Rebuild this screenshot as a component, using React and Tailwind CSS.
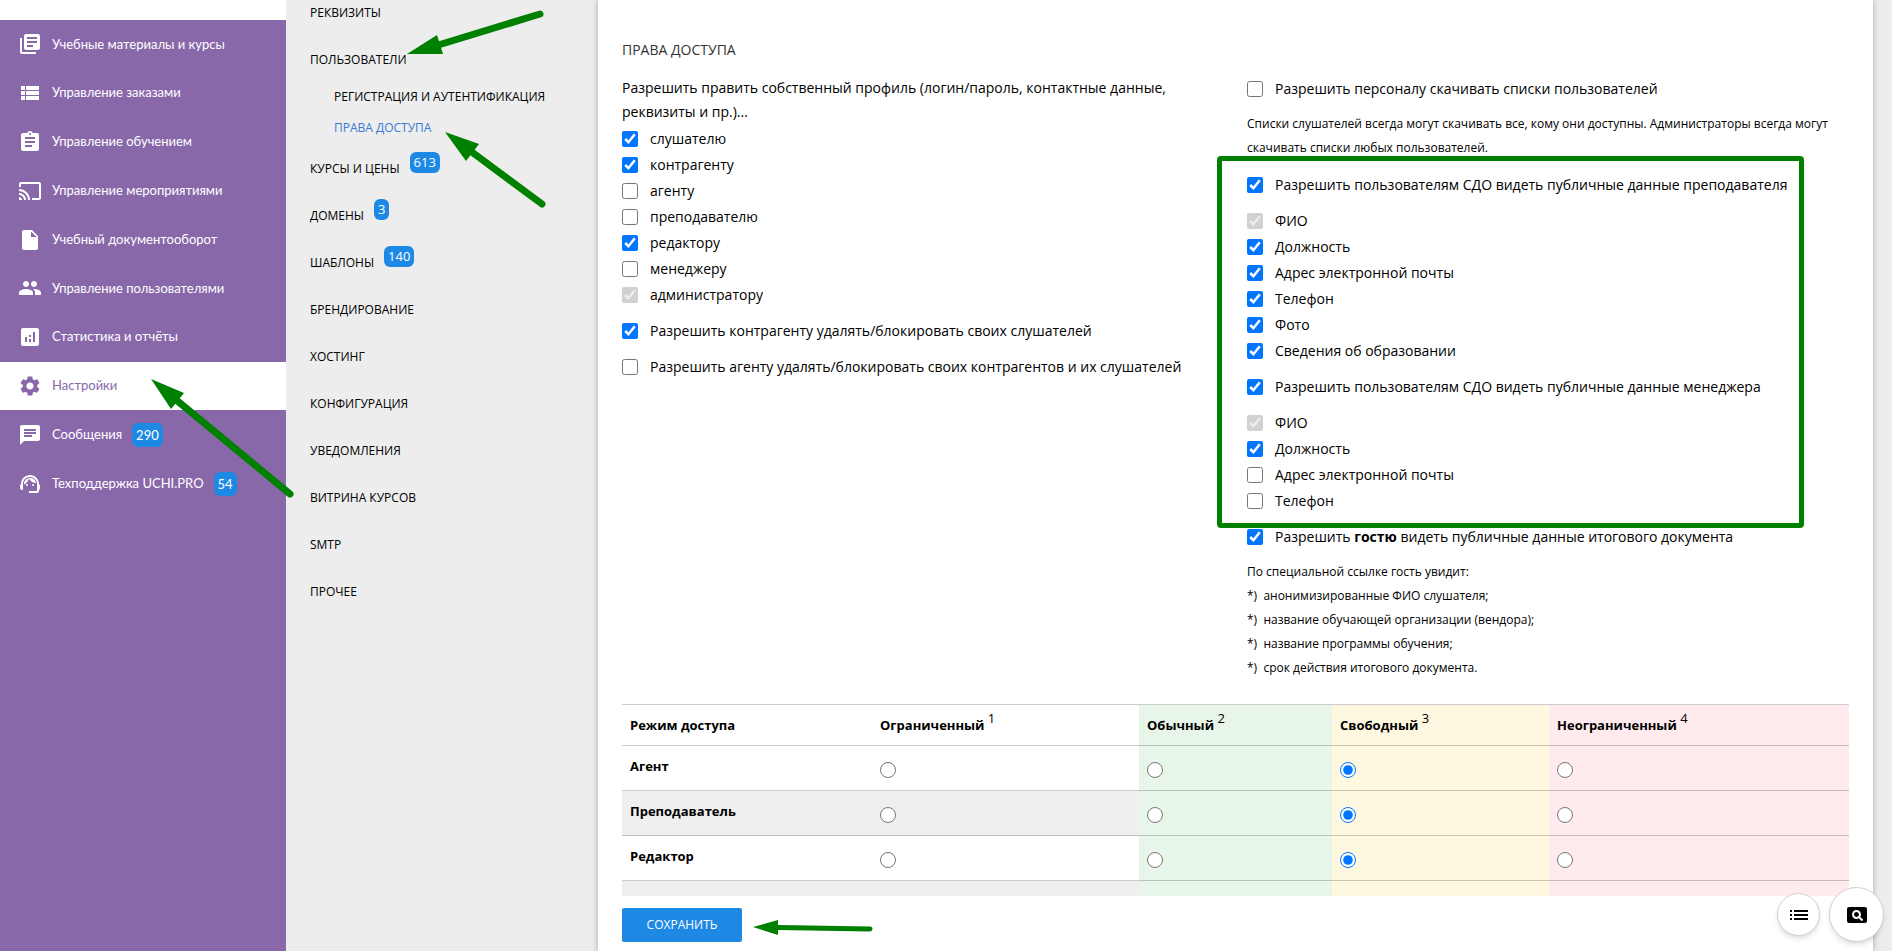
import React from "react";
import {
  MdLibraryBooks, MdViewList, MdAssignment, MdCast, MdInsertDriveFile, MdPeople,
  MdAnalytics, MdSettings, MdChat, MdSupportAgent, MdList, MdPageview,
} from "react-icons/md";

const mainMenu = [
  { icon: MdLibraryBooks, label: "Учебные материалы и курсы" },
  { icon: MdViewList, label: "Управление заказами" },
  { icon: MdAssignment, label: "Управление обучением" },
  { icon: MdCast, label: "Управление мероприятиями" },
  { icon: MdInsertDriveFile, label: "Учебный документооборот" },
  { icon: MdPeople, label: "Управление пользователями" },
  { icon: MdAnalytics, label: "Статистика и отчёты" },
  { icon: MdSettings, label: "Настройки", active: true },
  { icon: MdChat, label: "Сообщения", count: 290 },
  { icon: MdSupportAgent, label: "Техподдержка UCHI.PRO", count: 54 },
];

const settingsMenu = [
  { label: "РЕКВИЗИТЫ" },
  { label: "ПОЛЬЗОВАТЕЛИ", children: ["РЕГИСТРАЦИЯ И АУТЕНТИФИКАЦИЯ", "ПРАВА ДОСТУПА"] },
  { label: "КУРСЫ И ЦЕНЫ", count: 613 },
  { label: "ДОМЕНЫ", count: 3 },
  { label: "ШАБЛОНЫ", count: 140 },
  { label: "БРЕНДИРОВАНИЕ" },
  { label: "ХОСТИНГ" },
  { label: "КОНФИГУРАЦИЯ" },
  { label: "УВЕДОМЛЕНИЯ" },
  { label: "ВИТРИНА КУРСОВ" },
  { label: "SMTP" },
  { label: "ПРОЧЕЕ" },
];

const roles = [
  ["слушателю", true], ["контрагенту", true], ["агенту", false], ["преподавателю", false],
  ["редактору", true], ["менеджеру", false], ["администратору", true, true],
];
const teacherFields = [
  ["ФИО", true, true], ["Должность", true], ["Адрес электронной почты", true],
  ["Телефон", true], ["Фото", true], ["Сведения об образовании", true],
];
const managerFields = [
  ["ФИО", true, true], ["Должность", true], ["Адрес электронной почты", false], ["Телефон", false],
];
const modes = [
  ["Ограниченный", ""], ["Обычный", "bg-[#e8f5e9]"], ["Свободный", "bg-[#fff8e1]"], ["Неограниченный", "bg-[#ffebee]"],
];

function Check({ checked, disabled, children }) {
  return (
    <label className="flex h-[26px] items-center gap-3 whitespace-nowrap">
      <input type="checkbox" defaultChecked={checked} disabled={disabled} className="size-4 shrink-0 accent-[#0075ff]" />
      <span>{children}</span>
    </label>
  );
}

function CheckList({ items }) {
  return (
    <div>
      {items.map(([label, checked, disabled]) => (
        <Check key={label} checked={checked} disabled={disabled}>{label}</Check>
      ))}
    </div>
  );
}

function Arrow({ tail, tip, base, width }) {
  const neck = [(base[0][0] + base[1][0]) / 2, (base[0][1] + base[1][1]) / 2];
  return (
    <g fill="#008000" stroke="none">
      <line x1={tail[0]} y1={tail[1]} x2={neck[0]} y2={neck[1]} stroke="#008000" strokeWidth={width} strokeLinecap="round" />
      <polygon points={`${tip} ${base[0]} ${base[1]}`} />
    </g>
  );
}

export default function App() {
  return (
    <div className="relative flex h-screen overflow-hidden bg-[#ededed] font-['Open_Sans','Noto_Sans',sans-serif] text-black">
      <nav className="w-[286px] shrink-0 bg-[#8968aa] font-[Lato,'Open_Sans',sans-serif] text-[13px] text-white">
        <div className="h-5 bg-white" />
        <ul className="grid h-[488px] grid-rows-10">
          {mainMenu.map(({ icon: Icon, label, count, active }) => (
            <li key={label} className={active ? "bg-white text-[#8968aa]" : ""}>
              <a href="#" className="flex h-full items-center pl-[18px]">
                <Icon className="size-6" />
                <span className="ml-[10px]">{label}</span>
                {count && <span className="ml-[10px] rounded-md bg-[#1e88e5] px-1 text-[13px] leading-6">{count}</span>}
              </a>
            </li>
          ))}
        </ul>
      </nav>

      <nav className="w-[312px] shrink-0 pl-6 text-xs">
        <ul className="-mt-[11px]">
          {settingsMenu.map(({ label, count, children }) => (
            <li key={label}>
              <a href="#" className="flex h-[47px] items-center">
                {label}
                {count && <span className="mb-3 ml-[10px] rounded-md bg-[#1e88e5] px-1 text-[13px] leading-[21px] text-white">{count}</span>}
              </a>
              {children && (
                <ul className="-mt-0.5 mb-0.5 pl-6">
                  {children.map((c, i) => (
                    <li key={c}>
                      <a href="#" className={i === 1 ? "flex h-[31px] items-center text-[#3a7bd5]" : "flex h-[31px] items-center"}>{c}</a>
                    </li>
                  ))}
                </ul>
              )}
            </li>
          ))}
        </ul>
      </nav>

      <main className="mr-[19px] flex min-w-0 flex-1 flex-col bg-white px-6 text-sm shadow-[0_0_6px_rgba(0,0,0,0.3)]">
        <div className="min-h-0 flex-1 overflow-hidden pt-[38px]">
          <h1 className="mb-[14px] leading-6 text-[#333]">ПРАВА ДОСТУПА</h1>
          <div className="flex justify-between">
            <section className="w-[566px]">
              <p className="mb-[2px] leading-6">
                Разрешить править собственный профиль (логин/пароль, контактные данные, реквизиты и пр.)...
              </p>
              <div className="flex flex-col gap-[10px]">
                <CheckList items={roles} />
                <Check checked>Разрешить контрагенту удалять/блокировать своих слушателей</Check>
                <Check>Разрешить агенту удалять/блокировать своих контрагентов и их слушателей</Check>
              </div>
            </section>
            <section className="w-[602px]">
              <div className="flex flex-col gap-[10px]">
                <Check>Разрешить персоналу скачивать списки пользователей</Check>
                <p className="text-xs leading-6">
                  Списки слушателей всегда могут скачивать все, кому они доступны. Администраторы всегда могут скачивать списки любых пользователей.
                </p>
                <div className="relative mt-[2px] flex flex-col gap-[10px]">
                  <div className="pointer-events-none absolute -top-4 -bottom-[14px] -left-[30px] w-[587px] rounded-sm border-[5px] border-[#008000]" />
                  <Check checked>Разрешить пользователям СДО видеть публичные данные преподавателя</Check>
                  <CheckList items={teacherFields} />
                  <Check checked>Разрешить пользователям СДО видеть публичные данные менеджера</Check>
                  <CheckList items={managerFields} />
                </div>
                <Check checked>Разрешить <b>гостю</b> видеть публичные данные итогового документа</Check>
                <div className="text-xs leading-6">
                  <p>По специальной ссылке гость увидит:</p>
                  <p>*)&nbsp; анонимизированные ФИО слушателя;</p>
                  <p>*)&nbsp; название обучающей организации (вендора);</p>
                  <p>*)&nbsp; название программы обучения;</p>
                  <p>*)&nbsp; срок действия итогового документа.</p>
                </div>
              </div>
            </section>
          </div>

          <table className="mt-6 w-full table-fixed border-collapse text-left text-[13px]">
            <colgroup>
              <col className="w-[250px]" />
              <col className="w-[267px]" />
              <col className="w-[193px]" />
              <col className="w-[217px]" />
              <col />
            </colgroup>
            <thead>
              <tr className="h-[41px] border-y border-black/20">
                <th className="px-2">Режим доступа</th>
                {modes.map(([m, bg], i) => (
                  <th key={m} className={`px-2 ${bg}`}>{m} <sup className="text-[13px] font-normal">{i + 1}</sup></th>
                ))}
              </tr>
            </thead>
            <tbody>
              {["Агент", "Преподаватель", "Редактор"].map((role) => (
                <tr key={role} className="h-[45px] border-b border-black/20 even:bg-[#efefef]">
                  <th className="px-2 pb-[3px]">{role}</th>
                  {modes.map(([m, bg], i) => (
                    <td key={m} className={`px-2 pt-1 ${bg}`}>
                      <input type="radio" name={role} aria-label={`${role}: ${m}`} defaultChecked={i === 2} className="block size-4 accent-[#0075ff]" />
                    </td>
                  ))}
                </tr>
              ))}
              <tr className="h-[45px] bg-[#efefef]">
                <th />
                {modes.map(([m, bg]) => <td key={m} className={bg} />)}
              </tr>
            </tbody>
          </table>
        </div>
        <div className="flex h-[55px] shrink-0 items-start pt-3">
          <button type="button" className="h-[34px] w-[120px] rounded-xs bg-[#1e88e5] text-xs text-white">СОХРАНИТЬ</button>
        </div>
      </main>

      <div className="absolute right-2 bottom-[9px] flex items-center gap-[9px]">
        <button type="button" aria-label="Список" className="flex size-[43px] items-center justify-center rounded-full border border-[#d0d0d0] bg-white shadow-md">
          <MdList className="size-6" />
        </button>
        <button type="button" aria-label="Поиск" className="flex size-[55px] items-center justify-center rounded-full border border-[#d0d0d0] bg-white shadow-md">
          <MdPageview className="size-6" />
        </button>
      </div>

      <svg className="pointer-events-none absolute inset-0 h-full w-full" aria-hidden="true">
        <Arrow tail={[540, 14]} tip={[407, 54]} base={[[437, 35], [443, 54]]} width={7} />
        <Arrow tail={[542, 204]} tip={[445, 132]} base={[[479, 144], [466, 161]]} width={7} />
        <Arrow tail={[290, 494]} tip={[151, 379]} base={[[184, 393], [171, 409]]} width={7} />
        <Arrow tail={[870, 929]} tip={[753, 927]} base={[[778, 920], [778, 935]]} width={5} />
      </svg>
    </div>
  );
}
